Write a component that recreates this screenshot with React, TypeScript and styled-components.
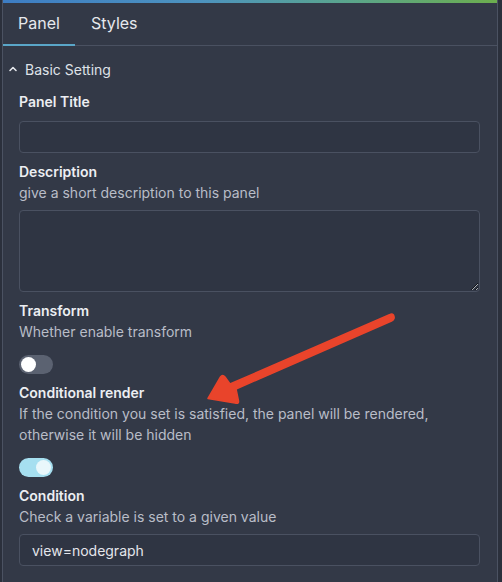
import styled, {createGlobalStyle} from "styled-components";

const GlobalStyle = createGlobalStyle`
  html, body {
    margin: 0;
    padding: 0;
    background: #2b303c;
  }
  body {
    font-family: Inter, "Noto Sans", "Liberation Sans", sans-serif;
    -webkit-font-smoothing: antialiased;
  }
`;

interface FieldProps {
    label: string;
    description?: string;
    children: React.ReactNode;
}

function Field({label, description, children}: FieldProps) {
    return (
        <FieldBox>
            <Label>{label}</Label>
            {description && <Description>{description}</Description>}
            <Control $gap={description ? 7 : 9}>{children}</Control>
        </FieldBox>
    );
}

function Arrow() {
    return (
        <ArrowLayer width="502" height="582" viewBox="0 0 502 582">
            <path
                d="M393.5 315 Q395.5 319 391.5 321 L236 389 L238.5 401 Q239 404 235 403 L208 398.5 L220.5 377 Q222.5 374 225 377 L230 384 L390 314.5 Q392 313.5 393.5 315 Z"
                fill="#e9442b"
                stroke="#e9442b"
                strokeWidth="1.5"
                strokeLinejoin="round"
            />
        </ArrowLayer>
    );
}

export default function App() {
    return (
        <>
            <GlobalStyle/>
            <Panel>
                <TopStripe/>
                <TabBar>
                    <Tab $active>Panel</Tab>
                    <Tab>Styles</Tab>
                </TabBar>
                <SectionHeader>
                    <Chevron viewBox="0 0 10 10">
                        <path d="M2 6.5 L5 3.5 L8 6.5" fill="none" stroke="currentColor" strokeWidth="1.6"
                              strokeLinecap="round" strokeLinejoin="round"/>
                    </Chevron>
                    Basic Setting
                </SectionHeader>
                <Body>
                    <Field label="Panel Title">
                        <Input/>
                    </Field>
                    <Field label="Description" description="give a short description to this panel">
                        <TextArea/>
                    </Field>
                    <Field label="Transform" description="Whether enable transform">
                        <Toggle $on={false}/>
                    </Field>
                    <Field
                        label="Conditional render"
                        description="If the condition you set is satisfied, the panel will be rendered, otherwise it will be hidden"
                    >
                        <Toggle $on/>
                    </Field>
                    <Field label="Condition" description="Check a variable is set to a given value">
                        <Input value="view=nodegraph" readOnly/>
                    </Field>
                </Body>
                <Arrow/>
            </Panel>
        </>
    );
}

const Panel = styled.div`
  position: relative;
  margin-left: 2px;
  width: 494px;
  height: 582px;
  overflow: hidden;
  background: #333947;
  border-left: 1px solid #4b5262;
  border-right: 1px solid #4b5262;
`;

const TopStripe = styled.div`
  height: 3px;
  background: linear-gradient(90deg, #3d7dc4 0%, #4d93bf 40%, #5aa58c 70%, #6cae4e 100%);
`;

const TabBar = styled.div`
  display: flex;
  height: 42px;
  border-bottom: 1px solid #4a5161;
`;

const Tab = styled.div<{ $active?: boolean }>`
  display: flex;
  align-items: center;
  justify-content: center;
  width: ${p => (p.$active ? "72px" : "auto")};
  padding: 0 16px 1px;
  box-sizing: border-box;
  font-size: 16px;
  color: #e6e8ed;
  border-bottom: 2px solid ${p => (p.$active ? "#5aa6c8" : "transparent")};
  margin-bottom: -1px;
`;

const SectionHeader = styled.div`
  display: flex;
  align-items: center;
  gap: 7px;
  margin-top: 13px;
  padding-left: 5px;
  height: 20px;
  font-size: 14px;
  color: #dfe2e8;
`;

const Chevron = styled.svg`
  width: 10px;
  height: 10px;
  color: #e4e6eb;
`;

const Body = styled.div`
  padding: 13px 17px 0 16px;
`;

const FieldBox = styled.div`
  margin-bottom: 9px;
`;

const Label = styled.div`
  font-size: 14px;
  line-height: 20px;
  font-weight: 600;
  color: #eceef2;
`;

const Description = styled.div`
  font-size: 14px;
  line-height: 21px;
  color: #b9bdc7;
`;

const Control = styled.div<{ $gap: number }>`
  display: flow-root;
  margin-top: ${p => p.$gap}px;
`;

const Input = styled.input`
  box-sizing: border-box;
  display: block;
  width: 100%;
  height: 32px;
  padding: 0 12px;
  background: #2f3543;
  border: 1px solid #4a5161;
  border-radius: 4px;
  color: #e4e6eb;
  font-family: inherit;
  font-size: 14px;
  outline: none;
`;

const TextArea = styled.textarea`
  box-sizing: border-box;
  display: block;
  width: 100%;
  height: 82px;
  background: #2f3543;
  border: 1px solid #4a5161;
  border-radius: 4px;
  outline: none;
  resize: vertical;
`;

const Toggle = styled.div<{ $on: boolean }>`
  position: relative;
  width: 34px;
  height: 19px;
  border-radius: 10px;
  background: ${p => (p.$on ? "#a6dff0" : "#5b6271")};
  margin-top: 6px;

  &::after {
    content: "";
    position: absolute;
    top: 2px;
    left: ${p => (p.$on ? "17px" : "2px")};
    width: 15px;
    height: 15px;
    border-radius: 50%;
    background: ${p => (p.$on ? "#e9f7fb" : "#ffffff")};
  }
`;

const ArrowLayer = styled.svg`
  position: absolute;
  left: -3px;
  top: 0;
  pointer-events: none;
`;
